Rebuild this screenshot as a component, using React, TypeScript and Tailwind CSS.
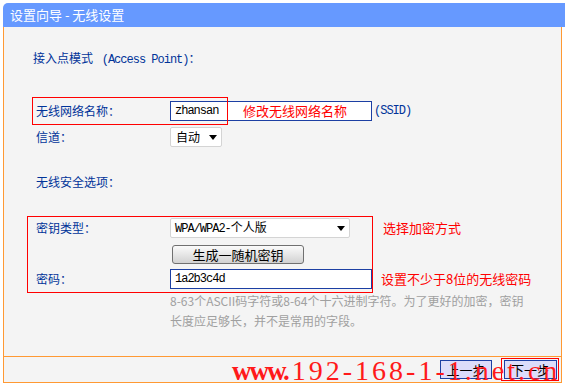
const cjk = '"Noto Sans CJK SC", "Liberation Sans", sans-serif';
const mono = '"Liberation Mono", "Noto Sans CJK SC", monospace';

function Caret() {
  return (
    <svg width="8" height="5" viewBox="0 0 8 5" className="shrink-0">
      <path d="M0 0 H8 L4 5 Z" fill="#000" />
    </svg>
  );
}

function Row({ label, children, className = "" }: { label: string; children?: React.ReactNode; className?: string }) {
  return (
    <div className={`flex items-center h-[20px] ${className}`}>
      <div className="w-[134px] text-[12px] leading-[20px] text-[#003399]">{label}</div>
      {children}
    </div>
  );
}

export default function App() {
  return (
    <div className="relative w-[565px] h-[387px] bg-white pt-[3px] overflow-hidden" style={{ fontFamily: cjk }}>
      {/* header */}
      <div className="ml-[3px] w-[562px] h-[24px] bg-[#6699ff] rounded-tl-[5px] pl-[7px] text-white text-[13px] leading-[24px]">
        设置向导 - 无线设置
      </div>

      {/* frame */}
      <div className="ml-[3px] w-[559px] border-x border-b border-[#ff9933] bg-[#f4f4f4]">
        <div className="h-[329px] pl-[32px] pt-[21px]">
          <div className="-ml-[3px] h-[20px] text-[12px] leading-[20px] text-[#003399]">
            接入点模式 <span className="ml-[6px] tracking-[-1px]" style={{ fontFamily: mono }}>(Access Point)</span>：
          </div>

          <Row label="无线网络名称：" className="mt-[33px]">
            <div className="relative w-[202px] h-[20px] border border-[#1c3fa3] bg-white pl-[4px] text-[12px] leading-[18px] text-black tracking-[-1px]" style={{ fontFamily: mono }}>
              zhansan
              <span className="absolute left-[72px] top-0 text-[13px] leading-[18px] text-[#ff0000] tracking-normal" style={{ fontFamily: cjk }}>修改无线网络名称</span>
            </div>
            <span className="ml-[2px] text-[12px] text-[#003399] tracking-[-1px]" style={{ fontFamily: mono }}>(SSID)</span>
          </Row>

          <Row label="信道：" className="mt-[6px]">
            <div className="flex items-center justify-between w-[52px] h-[20px] border border-[#d4d4d4] rounded-[2px] bg-white pl-[5px] pr-[4px] text-[12px] leading-[18px] text-black">
              自动
              <Caret />
            </div>
          </Row>

          <Row label="无线安全选项：" className="mt-[25px]" />

          <Row label="密钥类型：" className="mt-[26px]">
            <div className="flex items-center justify-between w-[180px] h-[20px] border border-[#d4d4d4] rounded-[2px] bg-white pl-[4px] pr-[4px] text-[12px] leading-[18px] text-black">
              <span>
                <span className="tracking-[-1px]" style={{ fontFamily: mono }}>WPA/WPA2-</span>个人版
              </span>
              <Caret />
            </div>
            <span className="ml-[33px] text-[13px] text-[#ff0000]">选择加密方式</span>
          </Row>

          <div className="flex mt-[7px] pl-[136px]">
            <div className="w-[132px] h-[19px] border border-[#707070] rounded-[3px] bg-gradient-to-b from-[#fbfbfb] to-[#d2d2d2] text-center text-[13px] leading-[17px] text-black">
              生成一随机密钥
            </div>
          </div>

          <Row label="密码：" className="mt-[5px]">
            <div className="w-[202px] h-[20px] border border-[#1c3fa3] bg-white pl-[4px] text-[12px] leading-[18px] text-black tracking-[-1px]" style={{ fontFamily: mono }}>
              1a2b3c4d
            </div>
            <span className="ml-[9px] text-[13px] text-[#ff0000]">设置不少于8位的无线密码</span>
          </Row>

          <div className="mt-[2px] pl-[134px] text-[12px] leading-[20px] text-[#a0a0a0]">
            <div>8-63个ASCII码字符或8-64个十六进制字符。为了更好的加密，密钥</div>
            <div>长度应足够长，并不是常用的字段。</div>
          </div>
        </div>

        {/* footer */}
        <div className="flex justify-end gap-[12px] h-[26px] border-t border-[#ff9933] pt-[3px] pr-[4px]">
          <div className="w-[52px] h-[19px] border border-[#1c3fa3] bg-[#dcdcfa] text-center text-[13px] leading-[17px] text-black">上一步</div>
          <div className="w-[53px] h-[19px] border border-[#1c3fa3] bg-[#dcdcfa] text-center text-[13px] leading-[17px] text-black">下一步</div>
        </div>
      </div>

      {/* annotation boxes */}
      <div className="absolute left-[32px] top-[97px] w-[196px] h-[28px] border border-[#ff0000]" />
      <div className="absolute left-[27px] top-[216px] w-[346px] h-[77px] border border-[#ff0000]" />
      <div className="absolute left-[501px] top-[358px] w-[58px] h-[23px] border border-[#ff0000]" />

      {/* watermark */}
      <div className="absolute left-[232px] top-[357px] whitespace-nowrap text-[28px] leading-[28px] text-[#ff1a1a]" style={{ fontFamily: '"Liberation Serif", serif' }}>
        <span className="font-bold tracking-[-2px] text-[27px]">www.</span>
        <span className="ml-[4px] tracking-[3px]">192-168-1-1.net.cn</span>
      </div>
    </div>
  );
}
